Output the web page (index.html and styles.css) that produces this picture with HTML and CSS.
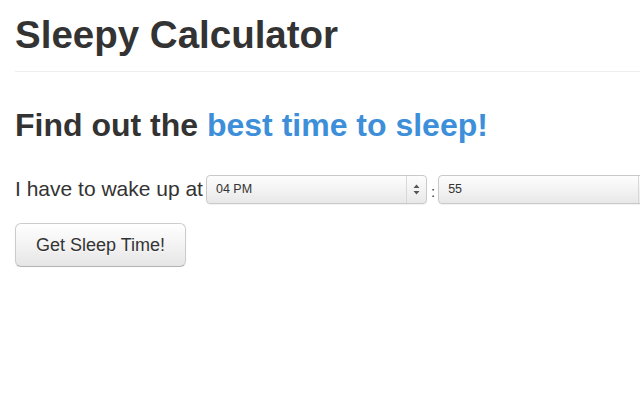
FILE: index.html
```html
<!DOCTYPE html>
<html>
<head>
<meta charset="utf-8">
<title>Sleepy Calculator</title>
<link rel="stylesheet" href="styles.css">
</head>
<body>
<div class="container">
  <h1 class="page-header">Sleepy Calculator</h1>
  <h2 class="subtitle">Find out the <span class="accent">best time to sleep!</span></h2>
  <div class="wake-row">
    <span class="label">I have to wake up at</span>
    <div class="select">
      <span class="select-value">04 PM</span>
      <span class="select-arrows">
        <svg width="7" height="11" viewBox="0 0 7 11"><path d="M3.5 0.5 L6.5 4 H0.5 Z M3.5 10.5 L6.5 7 H0.5 Z" fill="#555"/></svg>
      </span>
    </div>
    <span class="colon">:</span>
    <div class="select">
      <span class="select-value">55</span>
      <span class="select-arrows">
        <svg width="7" height="11" viewBox="0 0 7 11"><path d="M3.5 0.5 L6.5 4 H0.5 Z M3.5 10.5 L6.5 7 H0.5 Z" fill="#555"/></svg>
      </span>
    </div>
  </div>
  <button class="btn-large">Get Sleep Time!</button>
</div>
</body>
</html>
```
FILE: styles.css
```css
html, body {
  margin: 0;
  padding: 0;
  overflow: hidden;
  background: #fff;
}
body {
  font-family: "Liberation Sans", Arial, Helvetica, sans-serif;
  color: #333;
}
.container {
  padding: 0 0 0 15px;
}
.page-header {
  margin: 15px 0 0;
  font-size: 38.5px;
  line-height: 40px;
  font-weight: bold;
  padding-bottom: 16px;
  border-bottom: 1px solid #eee;
  color: #333;
}
.subtitle {
  margin: 33px 0 0;
  font-size: 32px;
  line-height: 40px;
  font-weight: bold;
  color: #333;
}
.accent {
  color: #3d8fd9;
}
.wake-row {
  margin-top: 29px;
  display: flex;
  align-items: center;
  height: 30px;
  white-space: nowrap;
}
.label {
  font-size: 21px;
  color: #333;
  margin-right: 3px;
}
.select {
  flex: 0 0 auto;
  width: 219px;
  height: 27px;
  border: 1px solid #c9c9c9;
  border-radius: 4px;
  background: linear-gradient(#fdfdfd, #f1f1f1 60%, #e8e8e8);
  box-shadow: 0 1px 1px rgba(0,0,0,0.06);
  display: flex;
  align-items: center;
  box-sizing: content-box;
}
.select-value {
  flex: 1;
  font-size: 12.5px;
  color: #333;
  padding-left: 9px;
}
.select-arrows {
  width: 19px;
  height: 27px;
  border-left: 1px solid #d8d8d8;
  display: flex;
  align-items: center;
  justify-content: center;
}
.colon {
  font-size: 15px;
  color: #333;
  margin: 4px 3px 0 4px;
}
.btn-large {
  margin-top: 19px;
  display: block;
  width: 171px;
  height: 44px;
  padding: 0;
  font-family: "Liberation Sans", Arial, Helvetica, sans-serif;
  font-size: 18px;
  color: #333;
  text-shadow: 0 1px 1px rgba(255,255,255,0.75);
  background: linear-gradient(#ffffff, #e6e6e6);
  border: 1px solid #cccccc;
  border-bottom-color: #b3b3b3;
  border-radius: 6px;
  box-shadow: inset 0 1px 0 rgba(255,255,255,0.2), 0 1px 2px rgba(0,0,0,0.05);
}
```
